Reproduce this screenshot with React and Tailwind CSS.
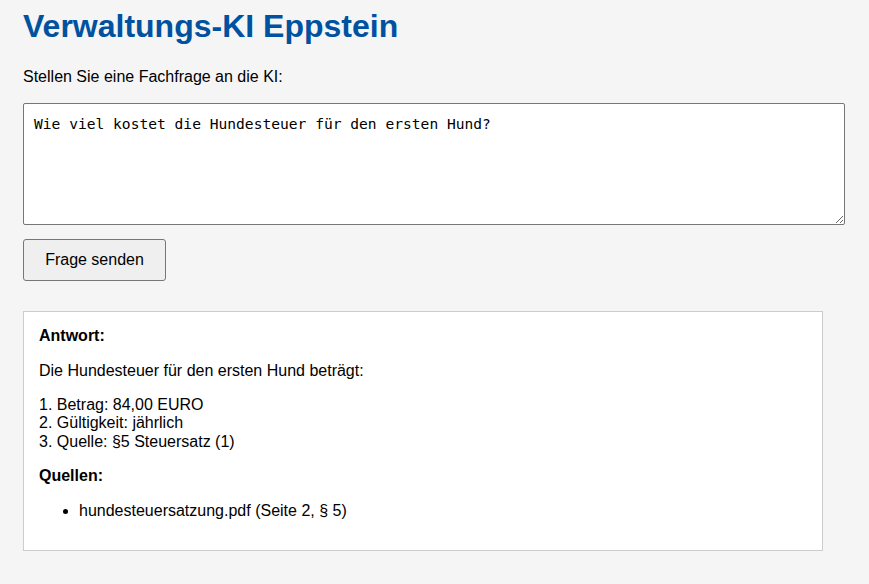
import { useState } from "react";

const App = () => {
    const [frage, setFrage] = useState("Wie viel kostet die Hundesteuer für den ersten Hund?");

    return (
        <div className="min-h-[584px] bg-[#f5f5f5] px-[23px] pt-2 pb-8 text-black font-['Liberation_Sans',Arial,sans-serif] text-base leading-[1.15]">
            {/* Title */}
            <h1 className="text-[32px] font-bold text-[#0052a0] leading-[1.15]">Verwaltungs-KI Eppstein</h1>

            <p className="mt-[23px]">Stellen Sie eine Fachfrage an die KI:</p>

            {/* Question */}
            <textarea
                value={frage}
                onChange={(e) => setFrage(e.target.value)}
                className="mt-[17px] block w-[822px] h-[122px] bg-white border border-[#767676] rounded-[2px] px-[10px] pt-[11px] pb-[10px] font-['DejaVu_Sans_Mono',monospace] text-[14.6px] leading-[1.2] resize-y outline-none"
            />

            <button className="mt-[14px] block h-[42px] w-[143px] bg-[#efefef] border border-[#767676] rounded-[3px] text-base text-black">
                Frage senden
            </button>

            {/* Answer */}
            <div className="mt-[30px] w-[800px] h-[240px] bg-white border border-[#cccccc] p-[15px]">
                <strong className="block font-bold">Antwort:</strong>
                <p className="mt-4">Die Hundesteuer für den ersten Hund beträgt:</p>
                <div className="mt-4">
                    <div>1. Betrag: 84,00 EURO</div>
                    <div>2. Gültigkeit: jährlich</div>
                    <div>3. Quelle: §5 Steuersatz (1)</div>
                </div>
                <strong className="block font-bold mt-4">Quellen:</strong>
                <ul className="mt-4 pl-10 list-disc">
                    <li>hundesteuersatzung.pdf (Seite 2, § 5)</li>
                </ul>
            </div>
        </div>
    )
}

export default App
